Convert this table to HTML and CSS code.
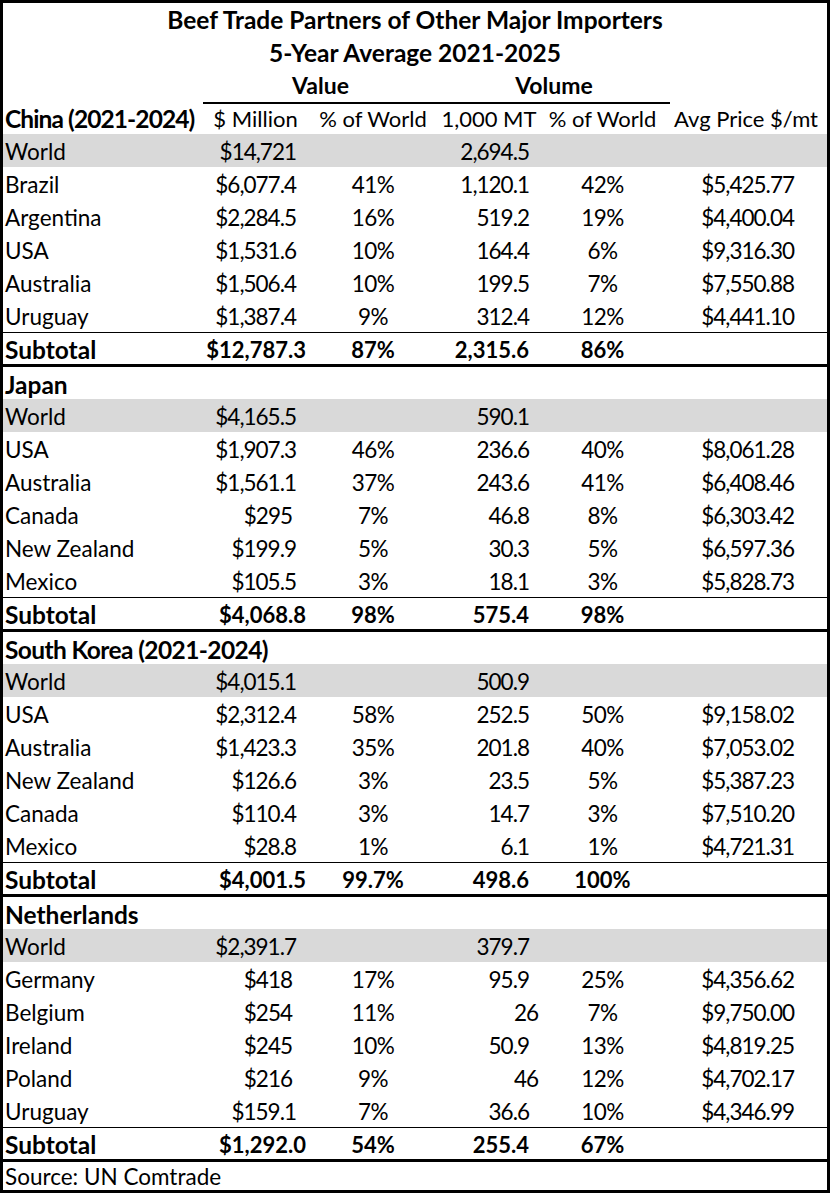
FILE: index.html
```html
<!DOCTYPE html>
<html lang="en">
<head>
  <meta charset="UTF-8" />
  <title>Beef Trade Partners of Other Major Importers</title>
  <link rel="stylesheet" href="styles.css">
</head>
<body>
  <div class="sheet">
    <div class="row title-row"><div class="title">Beef Trade Partners of Other Major Importers</div></div>
    <div class="row title-row"><div class="title">5-Year Average 2021-2025</div></div>
    <div class="row group-row">
      <div></div>
      <div class="group value">Value</div>
      <div class="group volume">Volume</div>
      <div></div>
    </div>
    <div class="row head-row">
      <div class="label bold china">China (2021-2024)</div>
      <div class="c">$ Million</div>
      <div class="c">% of World</div>
      <div class="c">1,000 MT</div>
      <div class="c">% of World</div>
      <div class="c">Avg Price $/mt</div>
    </div>

    <!-- China -->
    <div class="row world"><div class="label">World</div><div class="money">$14,721</div><div></div><div class="vol">2,694.5</div><div></div><div></div></div>
    <div class="row"><div class="label">Brazil</div><div class="money">$6,077.4</div><div class="pct">41%</div><div class="vol">1,120.1</div><div class="pct">42%</div><div class="price">$5,425.77</div></div>
    <div class="row"><div class="label">Argentina</div><div class="money">$2,284.5</div><div class="pct">16%</div><div class="vol">519.2</div><div class="pct">19%</div><div class="price">$4,400.04</div></div>
    <div class="row"><div class="label">USA</div><div class="money">$1,531.6</div><div class="pct">10%</div><div class="vol">164.4</div><div class="pct">6%</div><div class="price">$9,316.30</div></div>
    <div class="row"><div class="label">Australia</div><div class="money">$1,506.4</div><div class="pct">10%</div><div class="vol">199.5</div><div class="pct">7%</div><div class="price">$7,550.88</div></div>
    <div class="row"><div class="label">Uruguay</div><div class="money">$1,387.4</div><div class="pct">9%</div><div class="vol">312.4</div><div class="pct">12%</div><div class="price">$4,441.10</div></div>
    <div class="row subtotal"><div class="label">Subtotal</div><div class="money">$12,787.3</div><div class="pct">87%</div><div class="vol">2,315.6</div><div class="pct">86%</div><div></div></div>

    <!-- Japan -->
    <div class="row section"><div class="label bold">Japan</div></div>
    <div class="row world"><div class="label">World</div><div class="money">$4,165.5</div><div></div><div class="vol">590.1</div><div></div><div></div></div>
    <div class="row"><div class="label">USA</div><div class="money">$1,907.3</div><div class="pct">46%</div><div class="vol">236.6</div><div class="pct">40%</div><div class="price">$8,061.28</div></div>
    <div class="row"><div class="label">Australia</div><div class="money">$1,561.1</div><div class="pct">37%</div><div class="vol">243.6</div><div class="pct">41%</div><div class="price">$6,408.46</div></div>
    <div class="row"><div class="label">Canada</div><div class="money int">$295</div><div class="pct">7%</div><div class="vol">46.8</div><div class="pct">8%</div><div class="price">$6,303.42</div></div>
    <div class="row"><div class="label">New Zealand</div><div class="money">$199.9</div><div class="pct">5%</div><div class="vol">30.3</div><div class="pct">5%</div><div class="price">$6,597.36</div></div>
    <div class="row"><div class="label">Mexico</div><div class="money">$105.5</div><div class="pct">3%</div><div class="vol">18.1</div><div class="pct">3%</div><div class="price">$5,828.73</div></div>
    <div class="row subtotal"><div class="label">Subtotal</div><div class="money">$4,068.8</div><div class="pct">98%</div><div class="vol">575.4</div><div class="pct">98%</div><div></div></div>

    <!-- South Korea -->
    <div class="row section"><div class="label bold korea">South Korea (2021-2024)</div></div>
    <div class="row world"><div class="label">World</div><div class="money">$4,015.1</div><div></div><div class="vol">500.9</div><div></div><div></div></div>
    <div class="row"><div class="label">USA</div><div class="money">$2,312.4</div><div class="pct">58%</div><div class="vol">252.5</div><div class="pct">50%</div><div class="price">$9,158.02</div></div>
    <div class="row"><div class="label">Australia</div><div class="money">$1,423.3</div><div class="pct">35%</div><div class="vol">201.8</div><div class="pct">40%</div><div class="price">$7,053.02</div></div>
    <div class="row"><div class="label">New Zealand</div><div class="money">$126.6</div><div class="pct">3%</div><div class="vol">23.5</div><div class="pct">5%</div><div class="price">$5,387.23</div></div>
    <div class="row"><div class="label">Canada</div><div class="money">$110.4</div><div class="pct">3%</div><div class="vol">14.7</div><div class="pct">3%</div><div class="price">$7,510.20</div></div>
    <div class="row"><div class="label">Mexico</div><div class="money">$28.8</div><div class="pct">1%</div><div class="vol">6.1</div><div class="pct">1%</div><div class="price">$4,721.31</div></div>
    <div class="row subtotal"><div class="label">Subtotal</div><div class="money">$4,001.5</div><div class="pct">99.7%</div><div class="vol">498.6</div><div class="pct">100%</div><div></div></div>

    <!-- Netherlands -->
    <div class="row section"><div class="label bold">Netherlands</div></div>
    <div class="row world"><div class="label">World</div><div class="money">$2,391.7</div><div></div><div class="vol">379.7</div><div></div><div></div></div>
    <div class="row"><div class="label">Germany</div><div class="money int">$418</div><div class="pct">17%</div><div class="vol">95.9</div><div class="pct">25%</div><div class="price">$4,356.62</div></div>
    <div class="row"><div class="label">Belgium</div><div class="money int">$254</div><div class="pct">11%</div><div class="vol int">26</div><div class="pct">7%</div><div class="price">$9,750.00</div></div>
    <div class="row"><div class="label">Ireland</div><div class="money int">$245</div><div class="pct">10%</div><div class="vol">50.9</div><div class="pct">13%</div><div class="price">$4,819.25</div></div>
    <div class="row"><div class="label">Poland</div><div class="money int">$216</div><div class="pct">9%</div><div class="vol int">46</div><div class="pct">12%</div><div class="price">$4,702.17</div></div>
    <div class="row"><div class="label">Uruguay</div><div class="money">$159.1</div><div class="pct">7%</div><div class="vol">36.6</div><div class="pct">10%</div><div class="price">$4,346.99</div></div>
    <div class="row subtotal"><div class="label">Subtotal</div><div class="money">$1,292.0</div><div class="pct">54%</div><div class="vol">255.4</div><div class="pct">67%</div><div></div></div>

    <div class="row source"><div class="label">Source: UN Comtrade</div></div>
  </div>
</body>
</html>
```

FILE: styles.css
```css
* {
  margin: 0;
  padding: 0;
  box-sizing: border-box;
}

body {
  font-family: Lato, "Open Sans", sans-serif;
  font-size: 22.5px;
  color: #000;
  background: #fff;
}

/* Spreadsheet frame */
.sheet {
  width: 830px;
  height: 1193px;
  border: 3px solid #000;
  display: flex;
  flex-direction: column;
}

.row {
  display: grid;
  grid-template-columns: 200px 105px 130px 102px 125px 1fr;
  height: 33px;
  line-height: 33px;
  white-space: nowrap;
}

.row > div {
  padding-top: 1px;
}

.title-row {
  height: 32.5px;
  line-height: 32.5px;
  font-size: 24.5px;
  font-weight: bold;
}

.title-row .title {
  grid-column: 1 / -1;
  text-align: center;
}

.group-row {
  grid-template-columns: 200px 235px 227px 1fr;
  font-size: 23px;
  font-weight: bold;
}

.group {
  text-align: center;
  border-bottom: 2px solid #000;
}

.group.volume {
  margin-right: -5px;
}

.head-row {
  height: 32.5px;
}

.head-row .c {
  font-size: 22px;
}

.label {
  padding-left: 2px;
}

.bold {
  font-size: 24.5px;
  font-weight: bold;
}

.bold.china {
  letter-spacing: -0.9px;
}

.bold.korea {
  letter-spacing: -0.6px;
}

.c {
  text-align: center;
}

/* numeric cells, Excel-ish narrow figures */
.money,
.vol,
.price {
  text-align: right;
  letter-spacing: -1px;
}

.money {
  padding-right: 12px;
}

.money.int {
  padding-right: 16px;
}

.pct {
  text-align: center;
  letter-spacing: -0.5px;
}

.vol {
  padding-right: 11px;
}

.vol.int {
  padding-right: 2px;
}

.price {
  padding-right: 33px;
}

.world {
  background: #d9d9d9;
}

.section {
  height: 32px;
}

.section .label {
  grid-column: 1 / -1;
}

.subtotal {
  height: 35px;
  border-top: 1px solid #000;
  border-bottom: 3px solid #000;
  line-height: 31px;
  font-weight: bold;
}

.subtotal .label {
  font-size: 24.5px;
}

.subtotal .money,
.subtotal .vol,
.subtotal .pct {
  font-size: 22px;
  letter-spacing: 0;
}

.subtotal .money {
  padding-right: 2px;
}

.subtotal .vol {
  padding-right: 11px;
}

.source {
  flex: 1;
  line-height: 28px;
}

.source .label {
  grid-column: 1 / -1;
}
```
